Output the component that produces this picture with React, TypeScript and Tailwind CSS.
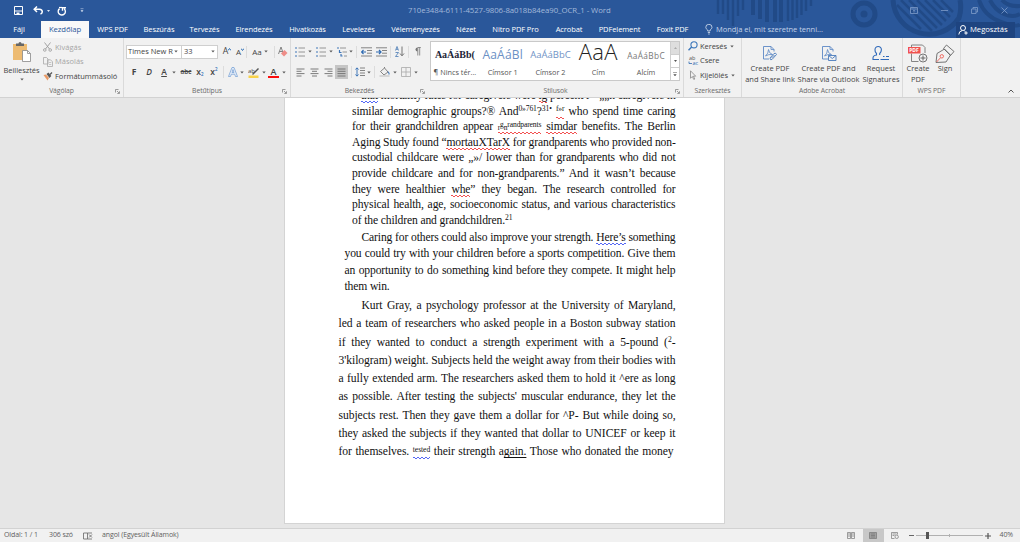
import type { ReactNode } from "react";

type Kids = { className?: string; children?: ReactNode };

function Cell({ className = "", children }: Kids) {
  return <div className={`flex shrink-0 items-center justify-center ${className}`}>{children}</div>;
}

function Svg({ w, h, className = "", children }: Kids & { w: number; h: number }) {
  return (
    <svg width={w} height={h} viewBox={`0 0 ${w} ${h}`} fill="none" className={`shrink-0 ${className}`}>
      {children}
    </svg>
  );
}

function Caret({ className = "" }: { className?: string }) {
  return (
    <Svg w={4} h={3} className={className}>
      <path d="M0.3 0.5h3.4L2 2.4z" fill="#5c5c5c" />
    </Svg>
  );
}

function Sep() {
  return <div className="h-3 w-px shrink-0 bg-[#dcdcdc]" />;
}

function Group({ label, className = "", launcher = false, children }: Kids & { label: string; launcher?: boolean }) {
  return (
    <section className={`flex shrink-0 flex-col border-r border-[#dadada] ${className}`}>
      <div className="h-[48px]">{children}</div>
      <div className="flex h-[11px] items-center">
        <span className="w-2" />
        <span className="flex-1 text-center text-[6.8px] leading-none tracking-[-0.08px] text-[#6a6a6a]">{label}</span>
        <span className="w-2">
          {launcher && (
            <Svg w={5} h={5}>
              <path d="M0.5 3.5v-3h3M2 2l2 2M4.5 2.3v2.2H2.3" stroke="#777" strokeWidth="0.7" />
            </Svg>
          )}
        </span>
      </div>
    </section>
  );
}

const tabs = [
  { name: "WPS PDF", w: "w-[47px]" },
  { name: "Beszúrás", w: "w-[46px]" },
  { name: "Tervezés", w: "w-[45px]" },
  { name: "Elrendezés", w: "w-[54px]" },
  { name: "Hivatkozás", w: "w-[53px]" },
  { name: "Levelezés", w: "w-[49px]" },
  { name: "Véleményezés", w: "w-[65px]" },
  { name: "Nézet", w: "w-[36px]" },
  { name: "Nitro PDF Pro", w: "w-[63px]" },
  { name: "Acrobat", w: "w-[44px]" },
  { name: "PDFelement", w: "w-[57px]" },
  { name: "Foxit PDF", w: "w-[49px]" },
];

function HeaderArt() {
  return (
    <svg width="310" height="38" viewBox="710 0 310 38" className="absolute right-0 top-0" fill="none">
      <g stroke="#214a87" strokeWidth="2.4">
        <path d="M718 0v14M723 0v14M728 0v20M733 0v26M738 0v16M743 0v10" />
        <path d="M753 0v15M760 0v19M767 0v22M775 0v22M781 0v22" strokeWidth="4" />
        <path d="M788 0v21M792.5 0v20M797 0v18M801.5 0v15M806 0v11M811 0v6" />
        <circle cx="864" cy="14" r="11" strokeWidth="5" />
        <circle cx="864" cy="14" r="3.5" fill="#214a87" stroke="none" />
        <path d="M893 0a36 36 0 0 0 66 18a36 36 0 0 0 1-18" strokeWidth="5" />
        <path d="M901 0l31 31M909 0l28 28M917 0l25 25M925 0l21 21M933 0l17 17M941 0l12 12M897 5l24 24" strokeWidth="2.5" />
        <path d="M979 0q5 16 22 22t19 2M990 0q5 10 14 14t16 0M1002 0q6 7 18 6" strokeWidth="4" />
      </g>
    </svg>
  );
}

function Header() {
  return (
    <header className="relative flex h-[38px] flex-col bg-[#2a579a] text-white">
      <HeaderArt />
      <div className="relative flex h-[21px] items-center">
        <Cell className="ml-3 w-[13px]">
          <Svg w={9} h={9}>
            <path d="M0.5 0.5h8v8h-8zM1 5h7" stroke="#fff" />
            <path d="M2.5 6.5h3v2h-3z" fill="#fff" />
          </Svg>
        </Cell>
        <Cell className="ml-[7px] w-3">
          <Svg w={11} h={9}>
            <path d="M4 0.5L1.2 3.3L4 6M1.5 3.3h4.8q3 0.3 3 2.5q0 1.5-1.8 2.4" stroke="#fff" strokeWidth="1.5" />
          </Svg>
        </Cell>
        <Cell className="ml-0.5 w-[5px]">
          <Svg w={3} h={2}><path d="M0 0h3L1.5 2z" fill="#dce6f4" /></Svg>
        </Cell>
        <Cell className="ml-[5px] w-[11px]">
          <Svg w={10} h={10}>
            <path d="M2.6 2.6a3.6 3.6 0 1 0 4.6 0.2M5.5 4.8V1.7h3.500" stroke="#fff" strokeWidth="1.4" />
            <path d="M2 1.500h3" stroke="#fff" strokeWidth="1.2" />
          </Svg>
        </Cell>
        <Cell className="ml-3 w-[5px]">
          <Svg w={4} h={5}><path d="M0.5 0.7h3M1 2.5h2L2 3.8z" stroke="#dce6f4" strokeWidth="0.5" fill="#dce6f4" /></Svg>
        </Cell>
        <div className="ml-[324px] w-[204px] whitespace-nowrap text-[7.8px] tracking-[-0.07px] text-[#a3b9da]">
          710e3484-6111-4527-9806-8a018b84ea90_OCR_1 - Word
        </div>
        <div className="ml-auto flex w-[110px] items-center gap-[23px]">
          <Svg w={8} h={7}><path d="M0.5 0.5h7v6h-7zM0.5 2h7M4 5.7V3.3M3 4.2l1-1l1 1" stroke="#7f9cc9" strokeWidth="0.8" /></Svg>
          <Svg w={7} h={7}><path d="M0 3.5h7" stroke="#7f9cc9" strokeWidth="0.8" /></Svg>
          <Svg w={7} h={7}><path d="M0.5 2h4.5v4.5H0.5zM2 2V0.5h4.5V5H5" stroke="#7f9cc9" strokeWidth="0.8" /></Svg>
          <Svg w={7} h={7}><path d="M0.5 0.5l6 6M6.5 0.5l-6 6" stroke="#7f9cc9" strokeWidth="0.8" /></Svg>
        </div>
      </div>
      <nav className="relative flex h-[17px] items-center whitespace-nowrap text-[7.5px] tracking-[-0.1px]">
        <Cell className="w-[38px]">Fájl</Cell>
        <Cell className="ml-[3px] h-full w-[48px] bg-[#f8f8f8] text-[7.7px] text-[#2a579a]">Kezdőlap</Cell>
        {tabs.map((t) => (
          <Cell key={t.name} className={t.w}>{t.name}</Cell>
        ))}
        <Svg w={8} h={11} className="ml-2">
          <path d="M2.7 7V6Q0.7 4.8 0.8 3.3A3.1 3 0 0 1 7 3.3Q7 4.8 5.1 6v1zM2.8 8.5h2.3M3.2 10h1.5" stroke="#d7e1f0" strokeWidth="0.8" />
        </Svg>
        <span className="ml-[3px] tracking-[-0.03px] text-[#c3d2e8]">Mondja el, mit szeretne tenni...</span>
        <div className="ml-auto mr-[5px] flex h-4 w-[59px] items-center bg-[#1e4480]">
          <Svg w={11} h={10} className="ml-0.5">
            <circle cx="5" cy="3" r="2.5" stroke="#fff" />
            <path d="M0.8 9.5Q1 6 4 5.7M6.3 5.8l1 0.5M8 6.3v3.4M6.3 8h3.4" stroke="#fff" />
          </Svg>
          <span className="ml-px text-[7.7px] tracking-[-0.05px]">Megosztás</span>
        </div>
      </nav>
    </header>
  );
}

function Clipboard() {
  return (
    <Group label="Vágólap" launcher className="w-[124px]">
      <div className="flex">
        <div className="flex w-[43px] flex-col items-center pt-[3px]">
          <Svg w={20} h={22}>
            <path d="M1 3h14v16H1z" fill="#edbb72" />
            <path d="M4 5V2.5h2.5Q6.5 1 8 1t1.5 1.5H12V5z" fill="#666" />
            <path d="M10.5 9.5h5l3 3v8h-8z" fill="#fff" stroke="#888" strokeWidth="0.8" />
            <path d="M15.5 9.5v3h3" stroke="#888" strokeWidth="0.8" />
          </Svg>
          <span className="mt-[3px] text-[7.5px] leading-[9px] tracking-[-0.06px]">Beillesztés</span>
          <Caret className="mt-[3px]" />
        </div>
        <div className="flex flex-col pt-[2px] text-[7.5px]">
          <div className="flex h-[14.7px] items-center text-[#a6a6a6]">
            <Svg w={9} h={10}>
              <path d="M1.5 0.5l5 6.5M7.5 0.5l-5 6.5" stroke="#999" strokeWidth="0.9" />
              <circle cx="1.8" cy="8" r="1.3" stroke="#999" strokeWidth="0.8" />
              <circle cx="7.2" cy="8" r="1.3" stroke="#999" strokeWidth="0.8" />
            </Svg>
            <span className="ml-[3px]">Kivágás</span>
          </div>
          <div className="flex h-[14.7px] items-center text-[#a6a6a6]">
            <Svg w={10} h={10}>
              <path d="M0.5 0.5h3l1.5 1.5v5H0.5zM4.5 2.8h3l2 2v4.7h-5z" fill="#f1f1f1" stroke="#aaa" strokeWidth="0.8" />
              <path d="M5.8 5.5h2.5M5.8 7.5h2.5" stroke="#aaa" strokeWidth="0.6" />
            </Svg>
            <span className="ml-[2px]">Másolás</span>
          </div>
          <div className="flex h-[14.7px] items-center">
            <Svg w={10} h={9}>
              <path d="M0.5 3l2.5-0.5l3 3.5l-1.5 2.5z" fill="#e99a65" />
              <path d="M3.5 2l2-1.5l2.8 3.5L6.5 6z" fill="#555" />
              <path d="M7 2.5l2-2" stroke="#555" strokeWidth="1.3" />
            </Svg>
            <span className="ml-[2px]">Formátummásoló</span>
          </div>
        </div>
      </div>
    </Group>
  );
}

function FontGroup() {
  return (
    <Group label="Betűtípus" launcher className="w-[167px]">
      <div className="flex h-[27px] items-center text-[7.5px]">
        <div className="ml-[2px] flex h-[14px] w-[56px] items-center border border-[#cfcfcf] bg-white">
          <span className="w-[47px] whitespace-nowrap pl-px">Times New R</span>
          <Caret />
        </div>
        <div className="-ml-px flex h-[14px] w-[37px] items-center justify-between border border-[#cfcfcf] bg-white px-[2px]">
          <span>33</span>
          <Caret />
        </div>
        <Cell className="ml-[3px] w-3 text-[8.8px]">A<Svg w={3} h={3} className="mb-[5px]"><path d="M0 2.5L1.5 0.5L3 2.5" stroke="#2b6cb5" /></Svg></Cell>
        <Cell className="ml-px w-3 text-[8px]">A<Svg w={3} h={3} className="mb-[5px]"><path d="M0 0.5L1.5 2.5L3 0.5" stroke="#2b6cb5" /></Svg></Cell>
        <Sep />
        <Cell className="ml-[5px] w-[10px] text-[8px]">Aa</Cell>
        <Caret className="ml-[2px]" />
        <div className="ml-[6px]"><Sep /></div>
        <Cell className="ml-[3px] w-[10px]">
          <Svg w={10} h={11}>
            <path d="M0.5 8L3 1l2.5 7M1.5 5.5h3" stroke="#777" strokeWidth="0.9" />
            <path d="M3 7.5l3.5-3.5l3 3L6 10.5z" fill="#ee8d88" />
          </Svg>
        </Cell>
      </div>
      <div className="flex h-[14px] items-center text-[8.5px]">
        <Cell className="ml-1 w-3 font-bold">F</Cell>
        <Cell className="ml-[3px] w-3 italic font-semibold">D</Cell>
        <Cell className="ml-[3px] w-3 font-semibold underline underline-offset-1">A</Cell>
        <Caret className="ml-[2px]" />
        <Cell className="ml-1 w-3 text-[6.4px] font-semibold line-through">abc</Cell>
        <Cell className="ml-[3px] w-[10px] font-semibold">x<span className="mt-[5px] text-[4.5px] leading-none text-[#2b6cb5]">2</span></Cell>
        <Cell className="ml-1 w-[10px] font-semibold">x<span className="mb-[5px] text-[4.5px] leading-none text-[#2b6cb5]">2</span></Cell>
        <div className="ml-1"><Sep /></div>
        <Cell className="ml-1 w-[10px]">
          <Svg w={10} h={10}>
            <path d="M0.5 9.5L4 0.5h2l3.5 9h-2L6.7 7.2H3.3L2.5 9.5zM4 5.5h2L5 2.5z" stroke="#6d9ad3" strokeWidth="0.7" fill="#e8f0fa" />
          </Svg>
        </Cell>
        <Caret className="ml-[2px]" />
        <Cell className="ml-1 w-3">
          <Svg w={12} h={11}>
            <path d="M0.5 8.5h10v2.5h-10z" fill="#f8d24b" />
            <text x="0" y="5.5" fontSize="6" fill="#444">ab</text>
            <path d="M10.5 1.5L4.5 7.5" stroke="#555" strokeWidth="1.5" />
          </Svg>
        </Cell>
        <Caret className="ml-[2px]" />
        <div className="ml-[2px] flex w-[11px] flex-col items-center">
          <span className="text-[9px] font-semibold leading-[9px]">A</span>
          <span className="h-[2px] w-[11px] bg-[#fb0d0d]" />
        </div>
        <Caret className="ml-[3px]" />
      </div>
    </Group>
  );
}

function ListIcon({ step = false }: { step?: boolean }) {
  return (
    <Svg w={10} h={10}>
      <path d={step ? "M0 1h2M2.5 3v2.5h2M4 7v2h1.5" : "M0 1h2M0 5h2M0 9h2"} stroke="#3f76b8" strokeWidth="1.2" />
      <path d={step ? "M3 1h6M5.5 5h4.5M7 9h3" : "M3.5 1H10M3.5 5H10M3.5 9H10"} stroke="#8a8a8a" strokeWidth="0.9" />
    </Svg>
  );
}

function IndentIcon({ flip = false }: { flip?: boolean }) {
  return (
    <Svg w={11} h={10}>
      <path d="M0 0.8h11M6 3.5h5M6 6.2h5M0 9h11" stroke="#777" strokeWidth="0.9" />
      <path d={flip ? "M0 5h4.5M3 3l2 2l-2 2" : "M5 5H0.8M2.5 3l-2 2l2 2"} stroke="#2f6bb2" strokeWidth="1.2" />
    </Svg>
  );
}

function AlignIcon({ d }: { d: string }) {
  return <Svg w={9} h={9}><path d={d} stroke="#6e6e6e" strokeWidth="0.9" /></Svg>;
}

function ParagraphGroup() {
  return (
    <Group label="Bekezdés" launcher className="w-[137px] border-r-0">
      <div className="flex h-[27px] items-center">
        <div className="w-1" />
        <ListIcon /><Caret className="ml-[3px]" />
        <div className="w-1" />
        <ListIcon /><Caret className="ml-[3px]" />
        <div className="w-1" />
        <ListIcon step /><Caret className="ml-[2px]" />
        <div className="ml-[3px] mr-[4px]"><Sep /></div>
        <IndentIcon />
        <div className="w-1" />
        <IndentIcon flip />
        <div className="ml-[3px] mr-1"><Sep /></div>
        <Svg w={10} h={11}>
          <path d="M0.5 4.5L2 0.5l1.5 4M1 3.3h2M0.5 6.5h3l-3 4h3" stroke="#4778b4" strokeWidth="0.8" />
          <path d="M7 0.5v9M5 7.5l2 2.3l2-2.3" stroke="#666" strokeWidth="0.9" />
        </Svg>
        <div className="ml-[3px] mr-[5px]"><Sep /></div>
        <Svg w={7} h={9}><path d="M3.8 8.5v-8h3M5.7 8.5v-8" stroke="#777" strokeWidth="0.8" /><path d="M3.5 0.5a2 2 0 0 0 0 4z" fill="#777" /></Svg>
      </div>
      <div className="flex h-[14px] items-center">
        <div className="w-[5px]" />
        <AlignIcon d="M0.5 1h8M0.5 3.3h5M0.5 5.6h8M0.5 8h5" />
        <div className="w-[5px]" />
        <AlignIcon d="M0.5 1h8M2 3.3h5M0.5 5.6h8M2 8h5" />
        <div className="w-[5px]" />
        <AlignIcon d="M0.5 1h8M3.5 3.3h5M0.5 5.6h8M3.5 8h5" />
        <Cell className="ml-[2px] h-[14px] w-[13px] bg-[#c5c5c5]">
          <AlignIcon d="M0.5 1h8M0.5 3.3h8M0.5 5.6h8M0.5 8h8" />
        </Cell>
        <div className="ml-[3px] mr-[3px]"><Sep /></div>
        <Svg w={10} h={10}>
          <path d="M2 1v8M0.5 2.5L2 0.8l1.5 1.7M0.5 7.5L2 9.2l1.5-1.7" stroke="#2f6bb2" strokeWidth="0.9" />
          <path d="M5 1h5M5 3.5h5M5 6h5M5 8.5h5" stroke="#777" strokeWidth="0.9" />
        </Svg>
        <Caret className="ml-[2px]" />
        <div className="ml-[3px] mr-[4px]"><Sep /></div>
        <Svg w={11} h={10}>
          <path d="M1.5 4.5l4-3.5l3.5 4l-4 3zM5.5 1V0" stroke="#777" strokeWidth="0.9" />
          <path d="M9 4.5q1.5 1.5 1 3" stroke="#2f6bb2" />
          <path d="M0.5 9h10" stroke="#bbb" />
        </Svg>
        <Caret className="ml-[3px]" />
        <div className="w-1" />
        <Svg w={10} h={10}><path d="M0.5 0.5h9v9h-9zM5 0.5v9M0.5 5h9" stroke="#aaa" strokeWidth="0.8" /></Svg>
        <Caret className="ml-[3px]" />
      </div>
    </Group>
  );
}

function StylesGroup() {
  const styles = [
    { sample: "AaÁáBb(", name: "¶ Nincs tér...", cls: "font-['Liberation_Serif'] font-semibold text-[10px] text-[#1d2536]" },
    { sample: "AaÁáBl", name: "Címsor 1", cls: "text-[12px] tracking-[0.2px] text-[#6a8fc4]" },
    { sample: "AaÁáBbC", name: "Címsor 2", cls: "text-[9.5px] text-[#6f93c6]" },
    { sample: "AaA", name: "Cím", cls: "text-[22px] font-light text-[#222] tracking-[0.4px] -mt-1 pb-1" },
    { sample: "AaÁáBbC", name: "Alcím", cls: "text-[8.3px] text-[#777] tracking-[0.35px] pt-1" },
  ];
  return (
    <Group label="Stílusok" launcher className="w-[256px]">
      <div className="ml-[2px] mt-[3px] flex h-[40px] w-[250px] border border-[#c9c9c9] bg-white">
        {styles.map((s) => (
          <div key={s.name} className="flex w-[47.8px] flex-col items-center whitespace-nowrap">
            <div className="flex h-[25px] items-center">
              <span className={`leading-none ${s.cls}`}>{s.sample}</span>
            </div>
            <span className="text-[7.3px] leading-[10px] text-[#555]">{s.name}</span>
          </div>
        ))}
        <div className="ml-auto flex w-[9px] flex-col divide-y divide-[#cfcfcf] border-l border-[#cfcfcf]">
          <Cell className="flex-1 bg-[#dedede]"><Svg w={3} h={2}><path d="M0 2h3L1.5 0z" fill="#aaa" /></Svg></Cell>
          <Cell className="flex-1"><Svg w={3} h={2}><path d="M0 0h3L1.5 2z" fill="#555" /></Svg></Cell>
          <Cell className="flex-1"><Svg w={4} h={5}><path d="M0 0.5h4M0.8 2.5h2.4L2 4z" stroke="#555" strokeWidth="0.5" fill="#555" /></Svg></Cell>
        </div>
      </div>
    </Group>
  );
}

function EditGroup() {
  return (
    <Group label="Szerkesztés" className="w-[58px]">
      <div className="flex flex-col pl-1 pt-[1px] text-[7.5px] tracking-[-0.08px]">
        <div className="flex h-[14.5px] items-center">
          <Svg w={10} h={10}><circle cx="6" cy="3.8" r="3.1" stroke="#3d78bb" strokeWidth="1.1" /><path d="M3.7 6L0.5 9.3" stroke="#3d78bb" strokeWidth="1.4" /></Svg>
          <span className="ml-[2px] w-[30px]">Keresés</span><Caret />
        </div>
        <div className="flex h-[14.5px] items-center">
          <Svg w={11} h={11}>
            <text x="1" y="5" fontSize="5.5" fill="#555">ab</text>
            <text x="4.5" y="10" fontSize="5.5" fill="#2f6bb2">ac</text>
            <path d="M1 6.5v2h3" stroke="#2f6bb2" strokeWidth="0.8" />
          </Svg>
          <span className="ml-px">Csere</span>
        </div>
        <div className="flex h-[14.5px] items-center">
          <Svg w={9} h={10}><path d="M2.5 0.8v7.5l1.8-1.8l1.5 3l1-0.5l-1.4-2.8h2.3z" stroke="#888" strokeWidth="0.8" /></Svg>
          <span className="ml-[3px] w-[31px]">Kijelölés</span><Caret />
        </div>
      </div>
    </Group>
  );
}

function BigButton({ icon, lines, className = "" }: { icon: ReactNode; lines: string[]; className?: string }) {
  return (
    <div className={`flex shrink-0 flex-col items-center ${className}`}>
      <Cell className="h-[23px] pt-1">{icon}</Cell>
      {lines.map((l) => (
        <span key={l} className="whitespace-nowrap text-[7.5px] leading-[10.5px]">{l}</span>
      ))}
    </div>
  );
}

function PdfPage() {
  return (
    <>
      <path d="M12 6.5V4.5L9 1.5H1.5V14h5.5" stroke="#5c88c5" strokeWidth="0.9" />
      <path d="M9 1.5v3h3" stroke="#5c88c5" strokeWidth="0.8" />
      <path d="M3.5 11q3-2.5 3-6.5q0.5 4 4 5q-4-0.5-7 1.5z" stroke="#5c88c5" strokeWidth="0.8" />
    </>
  );
}

function AddInGroups() {
  return (
    <>
      <Group label="Adobe Acrobat" className="w-[161px]">
        <div className="flex pt-[2px]">
          <BigButton className="ml-[2px] w-[52px]" lines={["Create PDF", "and Share link"]} icon={
            <Svg w={16} h={17}><PdfPage /><path d="M8 13l4-4.5q2-1 2.5 1l-4.5 5q-2 1-2-1.5zM9.5 13l3-3" stroke="#4a7abb" strokeWidth="0.9" /></Svg>
          } />
          <BigButton className="w-[65px]" lines={["Create PDF and", "Share via Outlook"]} icon={
            <Svg w={16} h={17}><PdfPage /><path d="M7.5 10.5h7.5v5H7.5zl3.8 3L15 10.5" stroke="#4a7abb" strokeWidth="0.9" /></Svg>
          } />
          <BigButton className="w-[40px]" lines={["Request", "Signatures"]} icon={
            <Svg w={18} h={17}>
              <path d="M8.500 14.500h8.500M11 11.500h1.500M14 11.500h3M7 14.500H1v-1.500q0-2.500 3.500-3V8.500Q2.800 7 3 4.700a3.200 3.200 0 0 1 6.400 0Q9.400 7 7.700 8.500v1.500" stroke="#2f69ba" strokeWidth="1.1" />
            </Svg>
          } />
        </div>
      </Group>
      <Group label="WPS PDF" className="w-[58px]">
        <div className="flex pt-[2px]">
          <BigButton className="ml-px w-[28px]" lines={["Create", "PDF"]} icon={
            <Svg w={20} h={19}>
              <path d="M3.5 3V1h11l2.5 2.5V9M3.5 9.5v8h7" stroke="#777" strokeWidth="0.9" />
              <rect x="0" y="3" width="12.5" height="6.5" fill="#f0524f" />
              <text x="1.2" y="8.2" fontSize="5" fontWeight="700" fill="#fff">PDF</text>
              <circle cx="15" cy="14" r="4" stroke="#666" strokeWidth="0.9" fill="#f1f1f1" />
              <path d="M12.5 14h5M15 11.5v5" stroke="#666" />
            </Svg>
          } />
          <BigButton className="w-[26px]" lines={["Sign"]} icon={
            <Svg w={20} h={19}>
              <path d="M1 18.5L2 9.5L9.5 5l6 6l-4.5 7zM8.5 4.5L11.5 1l7.5 6.5l-3.5 4z" stroke="#666" strokeWidth="0.9" />
              <path d="M1.5 18L5.5 13.8" stroke="#ef6a61" /><circle cx="6.8" cy="12.3" r="1.7" stroke="#ef6a61" />
            </Svg>
          } />
        </div>
      </Group>
    </>
  );
}

const redWave =
  "bg-[linear-gradient(45deg,transparent_36%,#f25050_36%,#f25050_64%,transparent_64%),linear-gradient(-45deg,transparent_36%,#f25050_36%,#f25050_64%,transparent_64%)]";
const blueWave =
  "bg-[linear-gradient(45deg,transparent_36%,#5568f5_36%,#5568f5_64%,transparent_64%),linear-gradient(-45deg,transparent_36%,#5568f5_36%,#5568f5_64%,transparent_64%)]";

function Wavy({ blue = false, children }: { blue?: boolean; children: ReactNode }) {
  return (
    <span className={`bg-[length:4px_2px] bg-[position:0_100%,2px_100%] bg-repeat-x pb-px ${blue ? blueWave : redWave}`}>
      {children}
    </span>
  );
}

function Up({ children }: { children: ReactNode }) {
  return <span className="relative -top-[3.5px] text-[7.6px]">{children}</span>;
}

type Line = { t: ReactNode; end?: boolean; indent?: string };

function Para({ lines, className, row }: { lines: Line[]; className: string; row: string }) {
  return (
    <div className={className}>
      {lines.map((l, i) => (
        <p key={i} className={`whitespace-nowrap ${row} ${l.indent ?? ""} ${l.end ? "" : "[text-align-last:justify]"}`}>{l.t}</p>
      ))}
    </div>
  );
}

const care: Line[] = [
  { indent: "pl-[9px]", t: <><Wavy blue>that</Wavy> mortality rates for caregivers were <Wavy>ig</Wavy> percent l<Up>»»</Up> „„n caregivers in</> },
  { t: <>similar demographic groups?® And<Up>0»761</Up>?<Up>31•</Up> <Wavy><Up>f»r</Up></Wavy> who spend time caring</> },
  { t: <>for their grandchildren appear <Wavy><span className="text-[7.5px]">r<span className="relative -top-[3px]">g</span>n</span><Up>randparents</Up></Wavy> <Wavy>simdar</Wavy> benefits. The Berlin</> },
  { t: <>Aging Study found “<Wavy>mortauXTarX</Wavy> for grandparents who provided non-</> },
  { t: "custodial childcare were „»/ lower than for grandparents who did not" },
  { t: "provide childcare and for non-grandparents.” And it wasn’t because" },
  { t: <>they were healthier <Wavy>whe</Wavy>” they began. The research controlled for</> },
  { t: "physical health, age, socioeconomic status, and various characteristics" },
  { end: true, t: <>of the children and grandchildren.<Up>21</Up></> },
];

const strength: Line[] = [
  { indent: "pl-[17px]", t: <>Caring for others could also improve your strength. <Wavy blue>Here’s</Wavy> something</> },
  { t: "you could try with your children before a sports competition. Give them" },
  { t: "an opportunity to do something kind before they compete. It might help" },
  { end: true, t: "them win." },
];

const study: Line[] = [
  { indent: "pl-[23px]", t: "Kurt Gray, a psychology professor at the University of Maryland," },
  { t: "led a team of researchers who asked people in a Boston subway station" },
  { t: <>if they wanted to conduct a strength experiment with a 5-pound (<Up>2</Up>-</> },
  { t: "3'kilogram) weight. Subjects held the weight away from their bodies with" },
  { t: "a fully extended arm. The researchers asked them to hold it ^ere as long" },
  { t: "as possible. After testing the subjects' muscular endurance, they let the" },
  { t: "subjects rest. Then they gave them a dollar for ^P- But while doing so," },
  { t: "they asked the subjects if they wanted that dollar to UNICEF or keep it" },
  { indent: "pr-[2px]", t: <>for themselves. <Wavy blue><Up>tested</Up></Wavy> their strength a<span className="underline decoration-[0.5px] underline-offset-2">gain.</span> Those who donated the money</> },
];

function Document() {
  return (
    <main className="h-[430px] overflow-hidden bg-[#e6e6e6] pl-[284px]">
      <article className="flex h-[426px] w-[441px] flex-col border border-t-0 border-[#d4d4d4] bg-white font-['Liberation_Serif',serif] text-[11.6px] text-[#111]">
        <Para lines={care} className="-mt-[10px] ml-[67px] w-[323.5px] tracking-[-0.13px]" row="h-[15.6px] leading-[15.6px]" />
        <Para lines={strength} className="mt-[1.5px] ml-[59.5px] w-[331px] tracking-[-0.14px]" row="h-[16.5px] leading-[16.5px]" />
        <Para lines={study} className="mt-px ml-[53.5px] w-[337px] tracking-[-0.06px]" row="h-[18.33px] leading-[18.33px]" />
      </article>
    </main>
  );
}

function StatusBar() {
  return (
    <footer className="flex h-[14px] items-center border-t border-[#d2d2d2] bg-[#f1f1f1] text-[7px] tracking-[-0.1px] text-[#606060]">
      <span className="ml-1 w-[45px]">Oldal: 1 / 1</span>
      <span className="w-[34px]">306 szó</span>
      <Svg w={10} h={8}><path d="M0.5 1h4v6h-4zM4.5 1h4.5M4.5 7h4.5M6 2.5l3 3M9 2.5l-3 3" stroke="#666" strokeWidth="0.8" /></Svg>
      <span className="ml-[9px]">angol (Egyesült Államok)</span>
      <div className="ml-auto flex h-full items-center">
        <Svg w={8} h={7}><path d="M0.5 0.5h3v6h-3zM4.5 0.5h3v6h-3zM1 2h2M1 4h2M5 2h2M5 4h2" stroke="#777" strokeWidth="0.7" /></Svg>
        <Cell className="ml-2 h-full w-[21px] bg-[#c8c8c8]">
          <Svg w={8} h={7}><path d="M0.5 0.5h7v6h-7z" fill="#a0a0a0" stroke="#777" strokeWidth="0.7" /><path d="M2 2h4M2 3.5h4M2 5h4" stroke="#777" strokeWidth="0.7" /></Svg>
        </Cell>
        <Svg w={8} h={7} className="ml-[7px]"><path d="M3.5 6.5h-3v-6h6v2M1.5 2h4M1.5 3.5h2" stroke="#777" strokeWidth="0.7" /><circle cx="5.7" cy="4.8" r="1.7" stroke="#777" strokeWidth="0.7" /></Svg>
        <span className="ml-[10px] h-[1.5px] w-[5px] bg-[#666]" />
        <div className="ml-[2px] flex w-[67px] items-center">
          <span className="h-px w-[10px] bg-[#b0b0b0]" />
          <span className="h-[7px] w-[3px] bg-[#555]" />
          <span className="h-px w-[20px] bg-[#b0b0b0]" />
          <span className="h-[3px] w-px bg-[#b0b0b0]" />
          <span className="h-px flex-1 bg-[#b0b0b0]" />
        </div>
        <Svg w={6} h={6} className="ml-[2px]"><path d="M0 3h6M3 0v6" stroke="#555" strokeWidth="1.2" /></Svg>
        <span className="ml-[9px] mr-[7px]">40%</span>
      </div>
    </footer>
  );
}

export default function App() {
  return (
    <div className="flex h-[542px] w-[1020px] flex-col overflow-hidden font-['Open_Sans','Noto_Sans',sans-serif] text-[#444]">
      <Header />
      <div className="relative z-10 flex h-[60px] border-b border-[#d2d2d2] bg-[#f1f1f1]">
        <Clipboard />
        <FontGroup />
        <ParagraphGroup />
        <StylesGroup />
        <EditGroup />
        <AddInGroups />
        <Svg w={6} h={4} className="mb-1 ml-auto mr-[6px] self-end"><path d="M0.5 3.5L3 1l2.5 2.5" stroke="#555" /></Svg>
      </div>
      <Document />
      <StatusBar />
    </div>
  );
}
